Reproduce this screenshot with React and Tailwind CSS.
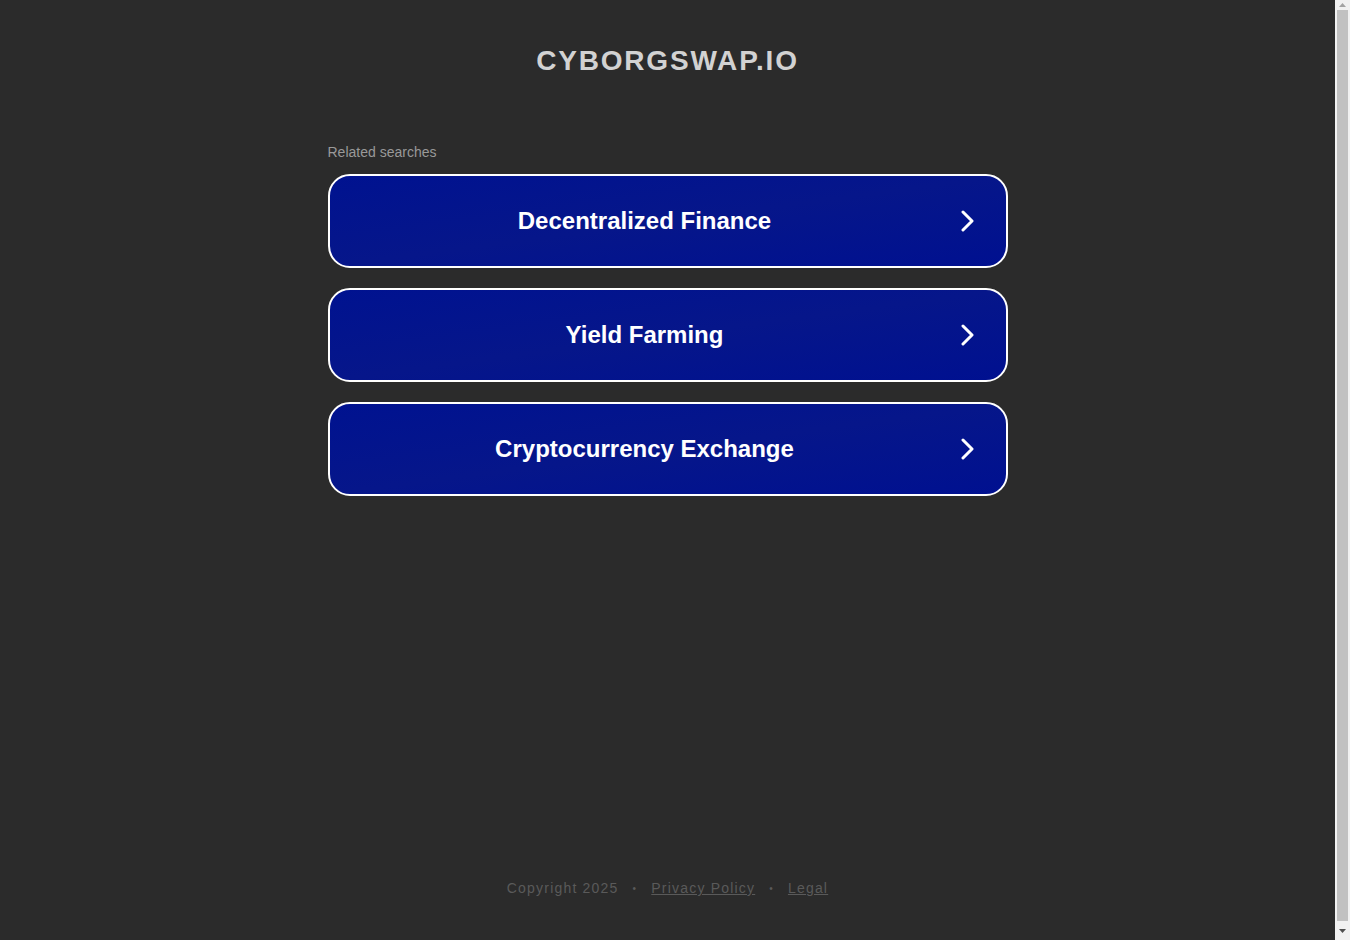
import React from 'react';

const searches = ['Decentralized Finance', 'Yield Farming', 'Cryptocurrency Exchange'];

const Chevron = () => (
  <svg width="16" height="22" viewBox="0 0 16 22" fill="none">
    <path d="M3 2l9 9-9 9" stroke="white" strokeWidth="3" strokeLinecap="round" strokeLinejoin="round" />
  </svg>
);

// page scrollbar as seen in the capture
const Scrollbar = () => (
  <div className="w-[15px] h-[940px] bg-[#f1f1f1] flex flex-col items-center shrink-0">
    <div className="h-[9px] flex items-center justify-center">
      <svg width="7" height="4" viewBox="0 0 7 4"><path d="M0 4L3.5 0 7 4z" fill="#a3a3a3" /></svg>
    </div>
    <div className="w-[11px] flex-1 bg-[#c1c1c1] my-[1px]" />
    <div className="h-[18px] flex items-center justify-center">
      <svg width="7" height="4" viewBox="0 0 7 4"><path d="M0 0h7L3.5 4z" fill="#505050" /></svg>
    </div>
  </div>
);

const App = () => {
  return (
    <div className="h-[940px] overflow-hidden flex font-['Liberation_Sans',Arial,sans-serif]">
      <div className="flex-1 bg-[#2b2b2b] flex flex-col items-center">
        <h1 className="mt-[45px] text-[28px] font-bold tracking-[1.8px] text-[#d2d2d2] leading-[32px]">CYBORGSWAP.IO</h1>
        <div className="w-[680px] mt-[67px]">
          <div className="text-[14px] text-[#999] leading-[16px] mb-[14px]">Related searches</div>
          <div className="flex flex-col gap-[20px]">
            {searches.map(s => (
              <a
                key={s}
                href="#"
                className="h-[94px] rounded-[22px] border-2 border-white bg-gradient-to-br from-[#001290] via-[#06168a] to-[#001090] flex items-center px-[30px]"
              >
                <span className="flex-1 text-center text-white font-bold text-[24px] pr-[30px]">{s}</span>
                <Chevron />
              </a>
            ))}
          </div>
        </div>
        <div className="mt-auto mb-[41px] text-[14px] tracking-[1.2px] text-[#5a5a5a] flex items-center gap-[14px]">
          <span>Copyright 2025</span>
          <span className="text-[10px]">•</span>
          <a href="#" className="underline">Privacy Policy</a>
          <span className="text-[10px]">•</span>
          <a href="#" className="underline">Legal</a>
        </div>
      </div>
      <Scrollbar />
    </div>
  );
};

export default App;
